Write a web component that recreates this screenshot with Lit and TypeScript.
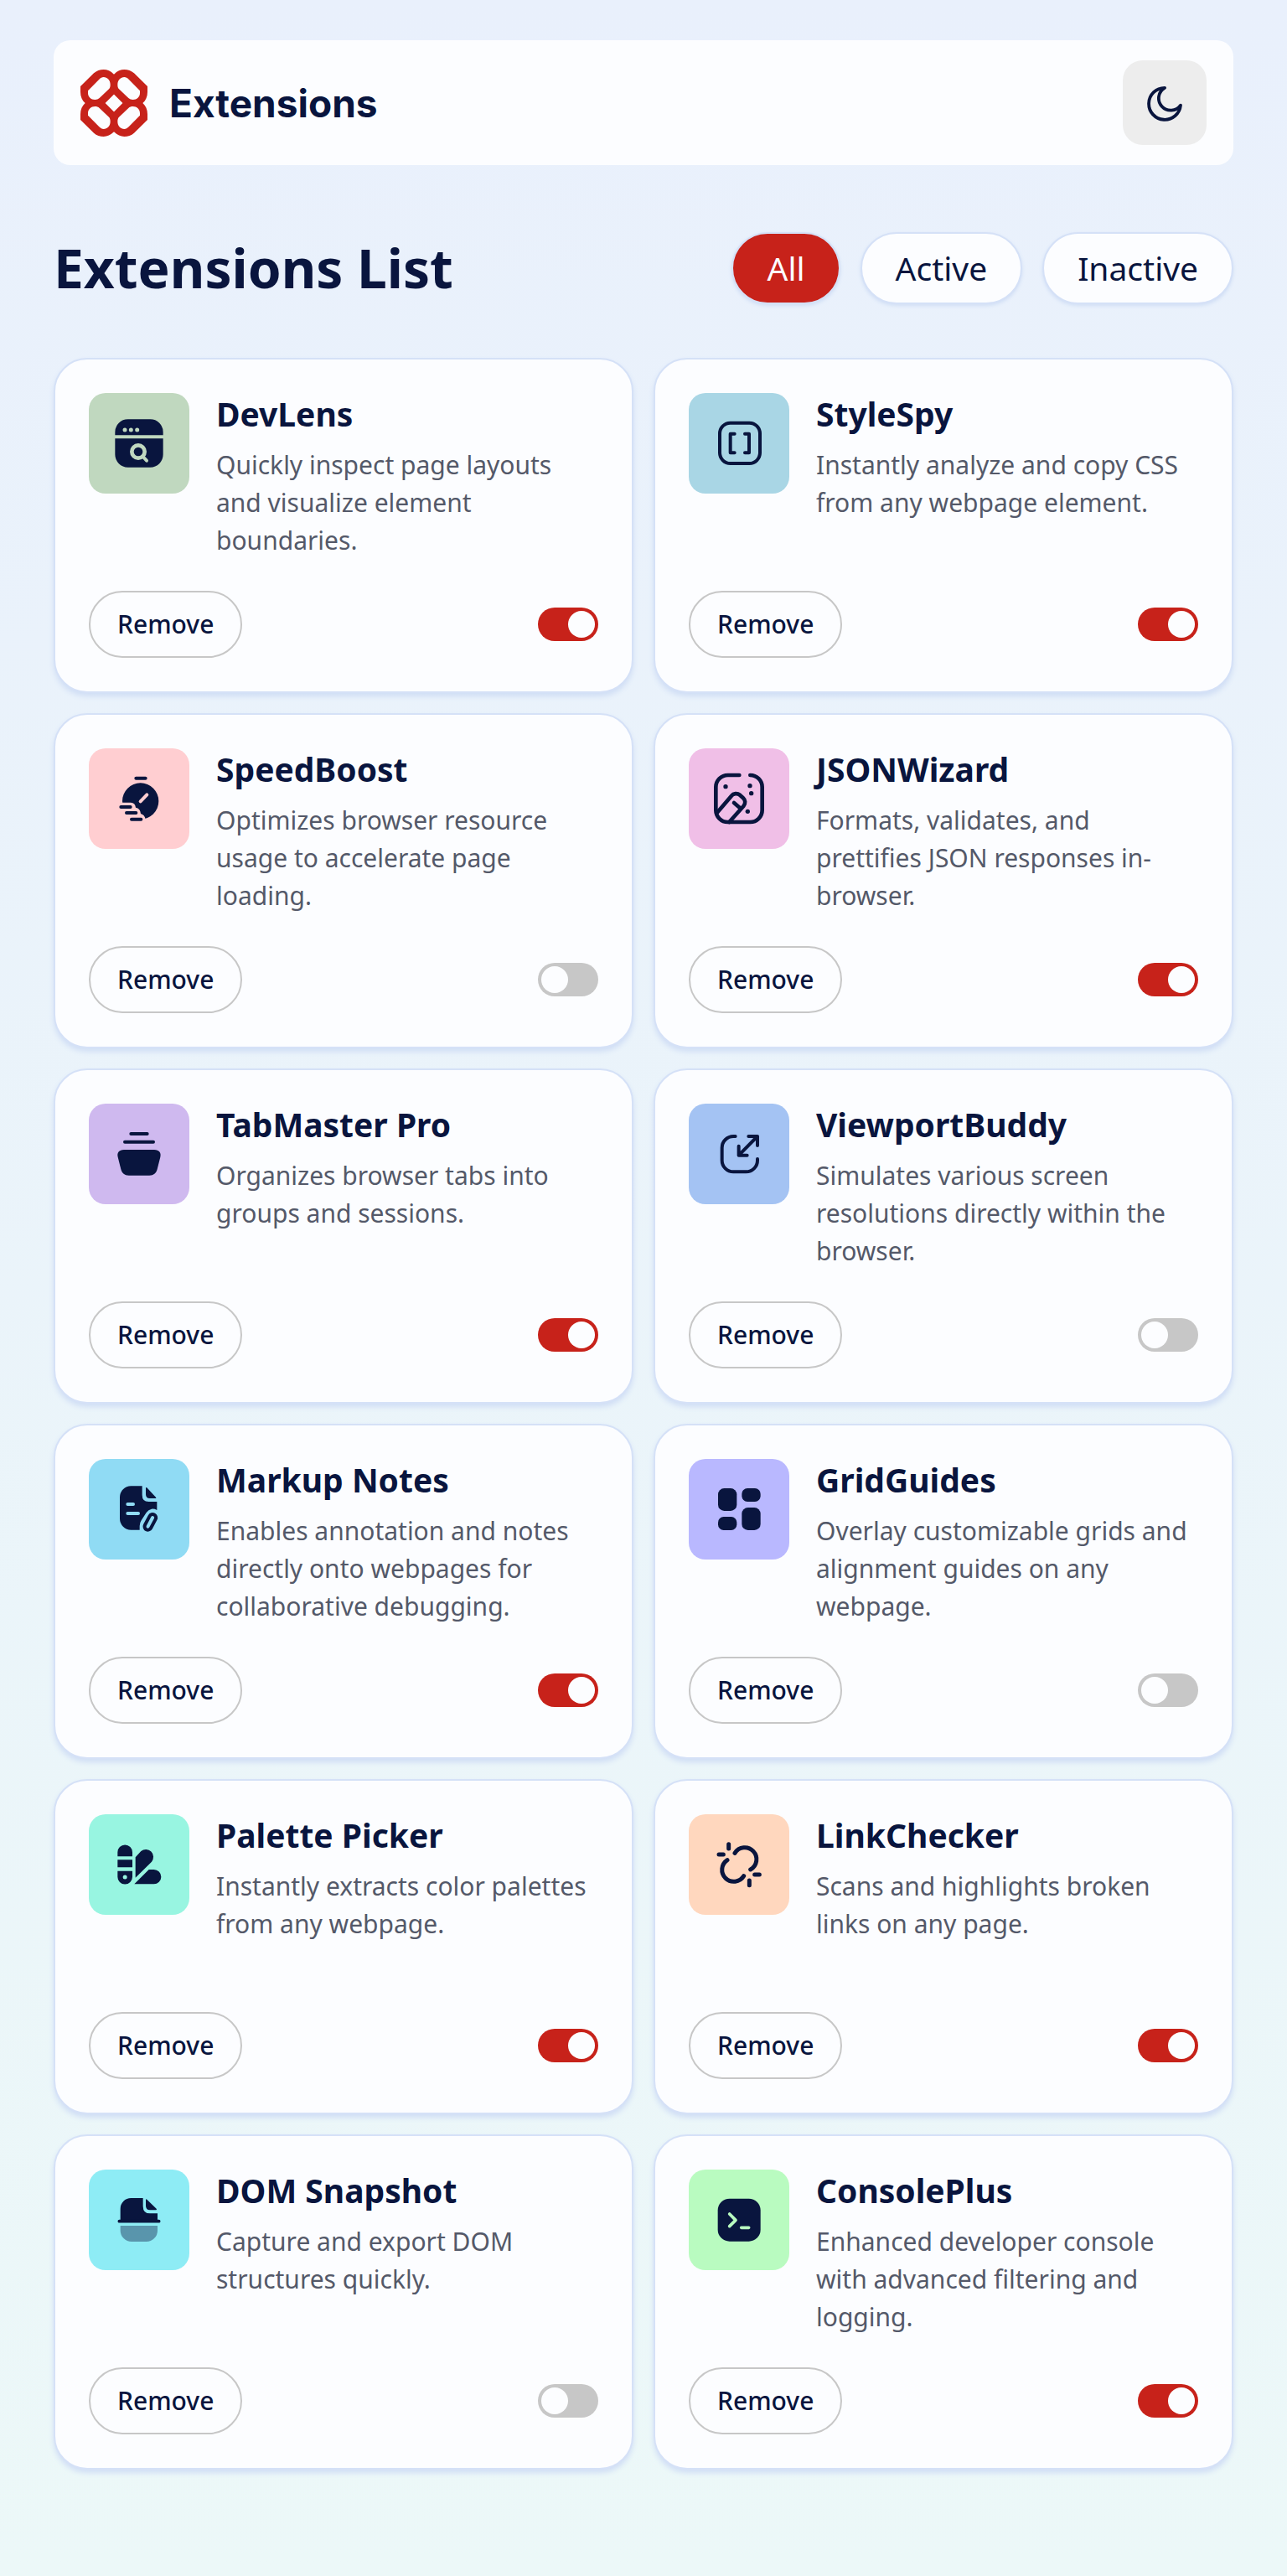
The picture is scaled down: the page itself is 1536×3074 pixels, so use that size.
import { LitElement, html, css, svg, type SVGTemplateResult } from "lit";
import { customElement, property, state } from "lit/decorators.js";

interface Extension {
  name: string;
  description: string;
  icon: string;
  active: boolean;
}

const INK = "#09153e";

/* Every card icon is drawn on a 360-unit tile. */
const tile = (color: string, body: SVGTemplateResult) =>
  svg`<rect width="360" height="360" rx="60" fill=${color}></rect>${body}`;

const icons: Record<string, SVGTemplateResult> = {
  lens: tile("#c0d8bf", svg`
    <path fill=${INK} d="M94 151V140A46 46 0 0 1 140 94H220A46 46 0 0 1 266 140V151ZM94 163H266V220A46 46 0 0 1 220 266H140A46 46 0 0 1 94 220Z"/>
    <g fill="#c0d8bf"><circle cx="129" cy="132" r="7.5"/><circle cx="151" cy="132" r="7.5"/><circle cx="173" cy="132" r="7.5"/></g>
    <g fill="none" stroke="#c0d8bf" stroke-width="14" stroke-linecap="round"><circle cx="177" cy="210" r="23"/><path stroke-width="12" d="M194 228L207 242"/></g>`),
  brackets: tile("#a9d6e5", svg`
    <g fill="none" stroke=${INK} stroke-width="12" stroke-linecap="round" stroke-linejoin="round">
      <rect x="111" y="107" width="144" height="145" rx="38"/><path d="M164 146H149V214H164M201 146H216V214H201"/></g>`),
  speed: tile("#ffced1", svg`
    <circle cx="185" cy="189" r="65" fill=${INK}/>
    <path fill="#ffced1" d="M110 194H150Q166 194 168 212Q184 214 186 234Q200 238 203 254L200 274H110Z"/>
    <g fill="none" stroke-width="12" stroke-linecap="round"><path stroke="#ffced1" d="M185 190L208 166"/>
      <path stroke=${INK} d="M169 107H203M115 210H149M135 231H169M153 254H187"/></g>`),
  wand: tile("#f0bfe7", svg`
    <g fill="none" stroke=${INK} stroke-width="14" stroke-linecap="round" stroke-linejoin="round">
      <path d="M181 96H140A43 43 0 0 0 97 139V221A43 43 0 0 0 140 264H220A43 43 0 0 0 263 221V139A43 43 0 0 0 220 96"/>
      <path d="M101 231L153 170C160 161 174 160 183 167L194 177C203 185 204 197 196 207L145 264M162 195L182 212"/></g>
    <g fill=${INK}><circle cx="132" cy="137" r="8"/><circle cx="219" cy="134" r="8"/><circle cx="224" cy="161" r="8"/><circle cx="211" cy="226" r="8"/></g>`),
  tabs: tile("#cfb9ef", svg`
    <g fill="none" stroke=${INK} stroke-width="12" stroke-linecap="round"><path d="M151 108H209M129 137H231"/></g>
    <path fill=${INK} d="M126 165H234C252 165 260 176 256 191L245 235C241 250 232 257 217 257H143C128 257 119 250 115 235L104 191C100 176 108 165 126 165Z"/>`),
  viewport: tile("#a4c3f3", svg`
    <g fill="none" stroke=${INK} stroke-width="12" stroke-linecap="round" stroke-linejoin="round">
      <path d="M167 117H160A41 41 0 0 0 119 158V203A41 41 0 0 0 160 244H205A41 41 0 0 0 246 203V198"/>
      <path d="M179 185L246 117M214 117H246V150M179 152V185H209"/></g>`),
  notes: tile("#90dbf4", svg`
    <path fill=${INK} d="M151 97H191V129Q191 153 214 153H244V183Q234 178 225 179Q213 182 206 192L188 220Q182 229 182 240V254H151A40 40 0 0 1 111 214V137A40 40 0 0 1 151 97ZM204 104Q204 100 208 103L240 137Q243 141 239 141H218Q204 141 204 127Z"/>
    <g fill="none" stroke-width="12" stroke-linecap="round"><path stroke="#90dbf4" d="M139 162H159M139 195H177"/>
      <rect x="208" y="196" width="24" height="60" rx="12" stroke=${INK} transform="rotate(28 220 226)"/></g>`),
  grid: tile("#b9b8ff", svg`
    <g fill=${INK}><rect x="105" y="105" width="67" height="81" rx="22"/><rect x="190" y="105" width="67" height="48" rx="20"/>
      <rect x="105" y="207" width="67" height="48" rx="20"/><rect x="190" y="174" width="67" height="81" rx="22"/></g>`),
  palette: tile("#98f5e1", svg`
    <path fill=${INK} fill-rule="evenodd" d="M103 151V136A26.500 26.500 0 0 1 156 136V151ZM103 163H156V190H103ZM103 203H156V224A26.500 26.500 0 0 1 103 224ZM122 225A7.500 7.500 0 1 0 137 225A7.500 7.500 0 1 0 122 225ZM167 154L187 132A27 27 0 0 1 225 170L167 227ZM163 250L215 198H233A26 26 0 0 1 233 250Z"/>`),
  link: tile("#ffd7be", svg`
    <g fill="none" stroke=${INK} stroke-width="15" stroke-linecap="round">
      <path d="M165 139A42 42 0 1 1 221 198M138 164A42 42 0 1 0 197 221"/>
      <path d="M143 107V123M108 144H124M236 216H253M217 237V254"/></g>`),
  dom: tile("#8eecf5", svg`
    <path fill=${INK} d="M113 182V140A38 38 0 0 1 151 102H194V131Q194 157 219 157H246V182ZM204 109Q204 104 208 107L242 140Q245 145 240 145H219Q204 145 204 130Z"/>
    <path stroke=${INK} stroke-width="11" stroke-linecap="round" d="M109 185H251"/>
    <path fill=${INK} opacity="0.4" d="M113 201H246V218A40 40 0 0 1 206 258H153A40 40 0 0 1 113 218Z"/>`),
  console: tile("#b9fbc0", svg`
    <rect x="104" y="104" width="153" height="153" rx="42" fill=${INK}/>
    <g fill="none" stroke="#b9fbc0" stroke-width="11" stroke-linecap="round" stroke-linejoin="round"><path d="M146 159L168 181L146 203M188 208H215"/></g>`),
};

const extensions: Extension[] = [
  { name: "DevLens", description: "Quickly inspect page layouts and visualize element boundaries.", icon: "lens", active: true },
  { name: "StyleSpy", description: "Instantly analyze and copy CSS from any webpage element.", icon: "brackets", active: true },
  { name: "SpeedBoost", description: "Optimizes browser resource usage to accelerate page loading.", icon: "speed", active: false },
  { name: "JSONWizard", description: "Formats, validates, and prettifies JSON responses in-browser.", icon: "wand", active: true },
  { name: "TabMaster Pro", description: "Organizes browser tabs into groups and sessions.", icon: "tabs", active: true },
  { name: "ViewportBuddy", description: "Simulates various screen resolutions directly within the browser.", icon: "viewport", active: false },
  { name: "Markup Notes", description: "Enables annotation and notes directly onto webpages for collaborative debugging.", icon: "notes", active: true },
  { name: "GridGuides", description: "Overlay customizable grids and alignment guides on any webpage.", icon: "grid", active: false },
  { name: "Palette Picker", description: "Instantly extracts color palettes from any webpage.", icon: "palette", active: true },
  { name: "LinkChecker", description: "Scans and highlights broken links on any page.", icon: "link", active: true },
  { name: "DOM Snapshot", description: "Capture and export DOM structures quickly.", icon: "dom", active: false },
  { name: "ConsolePlus", description: "Enhanced developer console with advanced filtering and logging.", icon: "console", active: true },
];

@customElement("extension-card")
export class ExtensionCard extends LitElement {
  @property({ attribute: false }) item!: Extension;

  static styles = css`
    :host {
      display: flex;
      flex-direction: column;
      justify-content: space-between;
      gap: 38px;
      padding: 40px;
      border: 2px solid #d5e1f7;
      border-radius: 40px;
      background: #fcfdff;
      box-shadow: 0 4px 6px #d0def5;
    }
    .summary { display: flex; align-items: flex-start; gap: 32px; }
    .icon { flex: none; width: 120px; height: 120px; }
    .text { display: flex; flex-direction: column; gap: 13px; min-height: 198px; }
    .name { margin: 0; font-size: 39px; line-height: 50px; font-weight: 700; color: #09153e; }
    .description { margin: 0; font-size: 30px; line-height: 45px; color: #545969; }
    .actions { display: flex; align-items: center; justify-content: space-between; }
    .remove {
      height: 80px;
      padding: 0 32px;
      border: 2px solid #c7c7c7;
      border-radius: 40px;
      background: transparent;
      color: #09153e;
      font: 500 30px/40px "Noto Sans", sans-serif;
      cursor: pointer;
    }
    .toggle {
      appearance: none;
      display: flex;
      width: 72px;
      height: 40px;
      margin: 0;
      padding: 4px;
      box-sizing: border-box;
      border-radius: 20px;
      background: #c7c7c7;
      cursor: pointer;
    }
    .toggle::before { content: ""; width: 32px; height: 32px; border-radius: 50%; background: #fcfdff; }
    .toggle:checked { background: #c7221a; justify-content: flex-end; }
  `;

  private onToggle(e: Event) {
    const active = (e.target as HTMLInputElement).checked;
    this.dispatchEvent(new CustomEvent("extension-toggle", { detail: active }));
  }

  render() {
    const { name, description, icon, active } = this.item;
    return html`
      <div class="summary">
        <svg class="icon" viewBox="0 0 360 360" aria-hidden="true">${icons[icon]}</svg>
        <div class="text">
          <h2 class="name">${name}</h2>
          <p class="description">${description}</p>
        </div>
      </div>
      <div class="actions">
        <button class="remove" type="button" @click=${() => this.dispatchEvent(new CustomEvent("extension-remove"))}>Remove</button>
        <input class="toggle" type="checkbox" role="switch" aria-label=${name} .checked=${active} @change=${this.onToggle} />
      </div>
    `;
  }
}

const PETAL =
  "M121 18L120 17C108 5 96 0 83 0C70 0 58 4 48 13L0 60V80C0 97 6 110 17 120L18 121H88L121 88Z" +
  "M67 35L27 76V84C27 98 38 108 52 108C58 108 64 106 68 102L102 70C106 66 107 60 107 54C107 38 96 27 83 27C77 27 72 30 67 35Z";

@customElement("app-root")
export class AppRoot extends LitElement {
  @state() private items = extensions;
  @state() private filter = "All";

  static styles = css`
    :host {
      display: block;
      min-height: 100vh;
      padding: 48px 64px 126px;
      box-sizing: border-box;
      background: linear-gradient(180deg, #e9f0fc 0%, #ecf8f8 100%);
      color: #09153e;
      font-family: "Noto Sans", sans-serif;
    }
    .header {
      display: flex;
      align-items: center;
      justify-content: space-between;
      padding: 24px 32px;
      border-radius: 20px;
      background: #fcfdff;
    }
    .brand { display: flex; align-items: center; gap: 26px; color: inherit; text-decoration: none; }
    .logo { width: 80px; height: 80px; }
    .brand-name { font: 700 46px/60px Inter, sans-serif; }
    .theme {
      display: grid;
      place-items: center;
      width: 100px;
      height: 101px;
      padding: 0;
      border: 0;
      border-radius: 24px;
      background: #ededed;
      cursor: pointer;
    }
    .moon { width: 44px; height: 44px; }
    .toolbar { display: flex; flex-wrap: wrap; align-items: center; justify-content: space-between; margin: 80px 0 64px; }
    .title { margin: 0; font-size: 64px; line-height: 86px; font-weight: 700; }
    .filters { display: flex; gap: 24px; }
    .filter {
      height: 86px;
      padding: 0 40px;
      border: 2px solid #d5e1f7;
      border-radius: 43px;
      background: #fcfdff;
      color: #09153e;
      font: 400 39px/54px "Noto Sans", sans-serif;
      box-shadow: 0 2px 4px #d0def5;
      cursor: pointer;
    }
    .filter.selected { background: #c7221a; color: #fcfdff; }
    .list { display: grid; grid-template-columns: repeat(2, minmax(0, 1fr)); gap: 24px; }
  `;

  private setActive(item: Extension, active: boolean) {
    this.items = this.items.map((i) => (i === item ? { ...i, active } : i));
  }

  render() {
    const shown = this.items.filter((i) => this.filter === "All" || i.active === (this.filter === "Active"));
    return html`
      <header class="header">
        <a class="brand" href="#">
          <svg class="logo" viewBox="0 0 240 240" aria-hidden="true" fill="#c7221a" fill-rule="evenodd">
            <path d=${PETAL} /><path d=${PETAL} transform="matrix(-1 0 0 1 240 0)" />
            <path d=${PETAL} transform="matrix(1 0 0 -1 0 240)" /><path d=${PETAL} transform="matrix(-1 0 0 -1 240 240)" />
          </svg>
          <span class="brand-name">Extensions</span>
        </a>
        <button class="theme" type="button" aria-label="Switch theme">
          <svg class="moon" viewBox="0 0 22 22" fill="none" stroke="#09153e" stroke-width="1.9" stroke-linejoin="round" aria-hidden="true">
            <path d="M11 1.900A9.500 9.500 0 1 0 20.500 12.300A7.200 7.200 0 1 1 11 1.900Z" />
          </svg>
        </button>
      </header>
      <main>
        <div class="toolbar">
          <h1 class="title">Extensions List</h1>
          <div class="filters">
            ${["All", "Active", "Inactive"].map(
              (f) => html`<button class="filter ${this.filter === f ? "selected" : ""}" type="button"
                aria-pressed=${this.filter === f} @click=${() => (this.filter = f)}>${f}</button>`,
            )}
          </div>
        </div>
        <section class="list">
          ${shown.map(
            (item) => html`<extension-card .item=${item}
              @extension-toggle=${(e: CustomEvent<boolean>) => this.setActive(item, e.detail)}
              @extension-remove=${() => (this.items = this.items.filter((i) => i !== item))}></extension-card>`,
          )}
        </section>
      </main>
    `;
  }
}
